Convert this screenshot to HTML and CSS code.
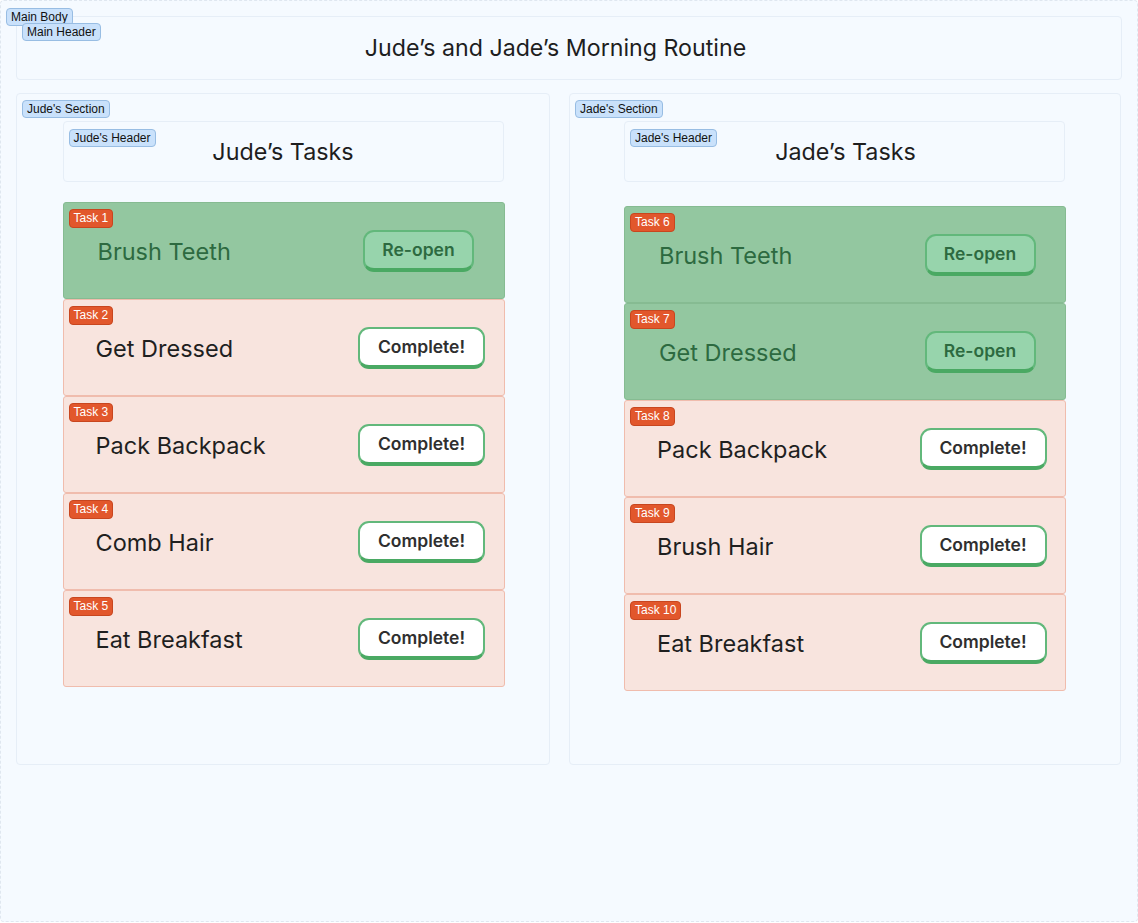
FILE: index.html
```html
<!DOCTYPE html>
<html>
<head>
<meta charset="utf-8">
<link rel="stylesheet" href="styles.css">
</head>
<body>
<div class="main-body">
  <span class="tag tag-body">Main Body</span>
  <header class="main-header">
    <span class="tag tag-mh">Main Header</span>
    <h1>Jude’s and Jade’s Morning Routine</h1>
  </header>
  <div class="sections">
    <section class="person jude">
      <span class="tag tag-sec">Jude's Section</span>
      <div class="col">
        <div class="p-header">
          <span class="tag tag-ph">Jude's Header</span>
          <h2>Jude’s Tasks</h2>
        </div>
        <div class="tasks">
          <div class="task done"><span class="badge">Task 1</span><span class="name">Brush Teeth</span><button class="btn reopen">Re-open</button></div>
          <div class="task"><span class="badge">Task 2</span><span class="name">Get Dressed</span><button class="btn">Complete!</button></div>
          <div class="task"><span class="badge">Task 3</span><span class="name">Pack Backpack</span><button class="btn">Complete!</button></div>
          <div class="task"><span class="badge">Task 4</span><span class="name">Comb Hair</span><button class="btn">Complete!</button></div>
          <div class="task"><span class="badge">Task 5</span><span class="name">Eat Breakfast</span><button class="btn">Complete!</button></div>
        </div>
      </div>
    </section>
    <section class="person jade">
      <span class="tag tag-sec">Jade's Section</span>
      <div class="col">
        <div class="p-header">
          <span class="tag tag-ph">Jade's Header</span>
          <h2>Jade’s Tasks</h2>
        </div>
        <div class="tasks">
          <div class="task done"><span class="badge">Task 6</span><span class="name">Brush Teeth</span><button class="btn reopen">Re-open</button></div>
          <div class="task done"><span class="badge">Task 7</span><span class="name">Get Dressed</span><button class="btn reopen">Re-open</button></div>
          <div class="task"><span class="badge">Task 8</span><span class="name">Pack Backpack</span><button class="btn">Complete!</button></div>
          <div class="task"><span class="badge">Task 9</span><span class="name">Brush Hair</span><button class="btn">Complete!</button></div>
          <div class="task"><span class="badge">Task 10</span><span class="name">Eat Breakfast</span><button class="btn">Complete!</button></div>
        </div>
      </div>
    </section>
  </div>
</div>
</body>
</html>
```

FILE: styles.css
```css
* { box-sizing: border-box; }
html, body { margin: 0; padding: 0; background: #ffffff; }
body { font-family: Inter, "Noto Sans", sans-serif; color: #1f1f1f; }

.main-body {
  position: relative;
  width: 1138px;
  height: 922px;
  background: #f5faff;
  border: 1px dashed #dfe7f0;
  border-radius: 4px;
  padding: 15px 15px 0 15px;
}

.tag {
  position: absolute;
  font-family: "Liberation Sans", Arial, sans-serif;
  font-size: 12px;
  line-height: 16px;
  color: #111;
  background: #c9e1fb;
  border: 1px solid #98bde3;
  border-radius: 4px;
  padding: 0 4px;
  white-space: nowrap;
  z-index: 2;
}
.tag-body { left: 5px; top: 7px; }
.tag-mh { left: 5px; top: 6px; }
.tag-sec { left: 5px; top: 6px; }
.tag-ph { left: 5px; top: 7px; }

.main-header {
  position: relative;
  height: 64px;
  border: 1px solid #e6eef7;
  border-radius: 4px;
  display: flex;
  align-items: center;
  justify-content: center;
  padding-right: 27px;
}
.main-header h1 {
  margin: 0;
  font-weight: 400;
  font-size: 23.2px;
  color: #1e1e1e;
}

.sections {
  margin-top: 13px;
  display: grid;
  grid-template-columns: 534px 552px;
  column-gap: 19px;
}

.person {
  position: relative;
  height: 672px;
  border: 1px solid #e6eef7;
  border-radius: 4px;
  padding-top: 27px;
  display: flex;
  justify-content: center;
}
.col { width: 442px; }
.jude .col { margin-left: 1px; }

.p-header {
  position: relative;
  height: 61px;
  width: 441px;
  border: 1px solid #e6eef7;
  border-radius: 4px;
  display: flex;
  align-items: center;
  justify-content: center;
}
.jade .p-header { padding-left: 2px; }
.p-header h2 {
  margin: 0;
  font-weight: 400;
  font-size: 23.3px;
  color: #1e1e1e;
}

.tasks { margin-top: 20px; display: flex; flex-direction: column; }
.jade .tasks { margin-top: 24px; }

.task {
  position: relative;
  height: 97px;
  display: grid;
  grid-template-columns: 1fr 130px;
  align-items: center;
  justify-items: center;
  padding: 0 17px 0 32px;
  background: #f8e4de;
  border: 1px solid #f0bcad;
  border-radius: 3px;
}
.task.done {
  background: #93c7a0;
  border-color: #86bb92;
  padding-left: 34px;
  padding-right: 20px;
}

.badge {
  position: absolute;
  left: 5px;
  top: 6px;
  font-family: "Liberation Sans", Arial, sans-serif;
  font-size: 12px;
  line-height: 17px;
  color: #fff;
  background: #e2572c;
  border: 1px solid #c8461f;
  border-radius: 4px;
  padding: 0 4px;
}

.name {
  justify-self: start;
  font-size: 23.5px;
  color: #1f1f1f;
  padding-top: 2px;
}
.done .name { color: #2d6a40; }

.btn {
  font-family: Inter, "Noto Sans", sans-serif;
  font-size: 17.5px;
  font-weight: 600;
  color: #2f2f2f;
  background: #ffffff;
  border: 2px solid #62b87b;
  border-bottom: 4px solid #4aa963;
  border-radius: 11px;
  height: 42px;
  width: 127px;
  padding: 0;
  cursor: pointer;
}
.btn.reopen {
  background: #97d4ac;
  color: #2d6a40;
  width: 111px;
}
```
